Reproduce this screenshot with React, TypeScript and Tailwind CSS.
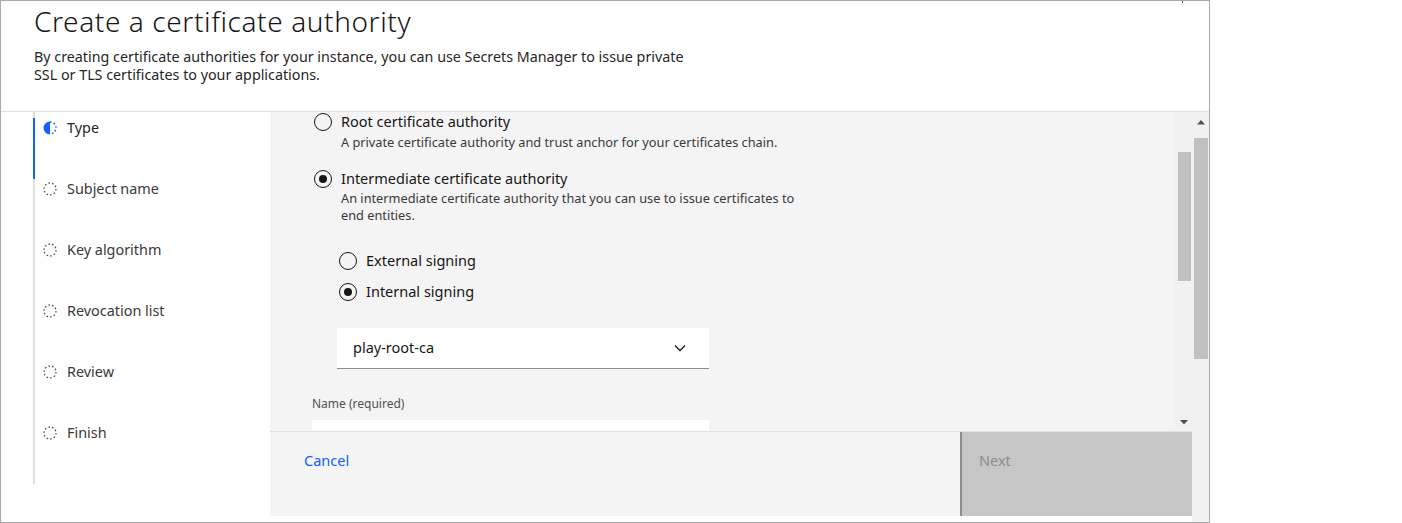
import React from "react";

const FONT = { fontFamily: '"Noto Sans", "Open Sans", Arial, sans-serif' };

function Radio({ checked }: { checked?: boolean }) {
  return (
    <div className="w-[18px] h-[18px] rounded-full border border-[#161616] flex items-center justify-center shrink-0 bg-transparent">
      {checked && <div className="w-[8px] h-[8px] rounded-full bg-[#161616]" />}
    </div>
  );
}

function DashedCircle() {
  return (
    <svg width="14" height="14" viewBox="0 0 14 14" className="shrink-0">
      <circle cx="7" cy="7" r="6" fill="none" stroke="#525252" strokeWidth="1.3" strokeDasharray="1.6 2.1" />
    </svg>
  );
}

function CurrentCircle() {
  return (
    <svg width="14" height="14" viewBox="0 0 14 14" className="shrink-0">
      <path d="M7 0.5 A6.5 6.5 0 0 0 7 13.5 Z" fill="#0f62fe" />
      <path d="M7 1 A6 6 0 0 1 7 13" fill="none" stroke="#0f62fe" strokeWidth="1.4" strokeDasharray="1.6 2.1" />
    </svg>
  );
}

const steps = ["Type", "Subject name", "Key algorithm", "Revocation list", "Review", "Finish"];

export default function App() {
  return (
    <div className="w-[1402px] h-[523px] bg-white flex" style={FONT}>
      <div className="w-[1210px] h-[523px] border border-[#a9a9a9] flex flex-col relative">
        <div className="absolute left-[1181px] top-0 w-[1px] h-[2px] bg-[#505050]" />
        {/* Header */}
        <div className="h-[111px] border-b border-[#e0e0e0] px-[33px] pt-[2px] shrink-0">
          <div className="text-[28px] leading-[36px] font-light text-[#161616] tracking-[0.6px]">
            Create a certificate authority
          </div>
          <div className="mt-[9px] text-[14.3px] leading-[18px] text-[#262626]">
            By creating certificate authorities for your instance, you can use Secrets Manager to issue private
            <br />
            SSL or TLS certificates to your applications.
          </div>
        </div>
        {/* Body */}
        <div className="flex flex-1 min-h-0">
          {/* Nav */}
          <div className="w-[269px] shrink-0 bg-white flex pl-[32px]">
            <div className="w-[2px] h-[372px] bg-[#e0e0e0] shrink-0">
              <div className="mt-[6px] h-[61px] w-[2px] bg-[#0f62fe]" />
            </div>
            <div className="flex flex-col">
              {steps.map((s, i) => (
                <div key={s} className="h-[61px] pt-[6px] flex items-start">
                  <div className="h-[20px] flex items-center pl-[8px] gap-[10px]">
                    {i === 0 ? <CurrentCircle /> : <DashedCircle />}
                    <span className={`text-[14.4px] leading-[20px] ${i === 0 ? "text-[#262626]" : "text-[#393939]"}`}>{s}</span>
                  </div>
                </div>
              ))}
            </div>
          </div>
          {/* Main */}
          <div className="w-[922px] shrink-0 flex flex-col">
            <div className="h-[319px] flex bg-[#f4f4f4] shrink-0">
              <div className="flex-1 overflow-hidden pl-[42px]">
                <div className="flex items-center h-[20px] gap-[9px] ml-[2px]">
                  <Radio />
                  <span className="text-[14.5px] text-[#161616]">Root certificate authority</span>
                </div>
                <div className="mt-[2px] ml-[29px] text-[12.75px] leading-[17px] text-[#393939]">
                  A private certificate authority and trust anchor for your certificates chain.
                </div>
                <div className="mt-[18px] flex items-center h-[20px] gap-[9px] ml-[2px]">
                  <Radio checked />
                  <span className="text-[14.5px] text-[#161616]">Intermediate certificate authority</span>
                </div>
                <div className="mt-[1px] ml-[29px] text-[12.75px] leading-[17px] text-[#393939]">
                  An intermediate certificate authority that you can use to issue certificates to
                  <br />
                  end entities.
                </div>
                <div className="pl-[25px]">
                  <div className="mt-[27px] flex items-center h-[20px] gap-[9px] ml-[2px]">
                    <Radio />
                    <span className="text-[14.5px] text-[#161616]">External signing</span>
                  </div>
                  <div className="mt-[11px] flex items-center h-[20px] gap-[9px] ml-[2px]">
                    <Radio checked />
                    <span className="text-[14.5px] text-[#161616]">Internal signing</span>
                  </div>
                  <div className="mt-[26px] w-[372px] h-[41px] bg-white border-b border-[#8d8d8d] flex items-center justify-between pl-[16px] pr-[23px]">
                    <span className="text-[14.5px] text-[#161616]">play-root-ca</span>
                    <svg width="12" height="8" viewBox="0 0 12 8">
                      <path d="M1 1.5 L6 6.5 L11 1.5" fill="none" stroke="#161616" strokeWidth="1.3" />
                    </svg>
                  </div>
                </div>
                <div className="mt-[27px] text-[12px] leading-[16px] text-[#525252]">Name (required)</div>
                <div className="mt-[8px] w-[397px] h-[40px] bg-white" />
              </div>
              {/* inner scrollbar */}
              <div className="w-[17px] bg-[#f1f1f1] shrink-0 flex flex-col items-center">
                <div className="mt-[40px] w-[13px] h-[129px] bg-[#c1c1c1] ml-[1px]" />
                <div className="flex-1" />
                <svg width="8" height="5" viewBox="0 0 8 5" className="mb-[6px]">
                  <path d="M0 0 H8 L4 4.5 Z" fill="#505050" />
                </svg>
              </div>
            </div>
            <div className="h-[85px] border-t border-[#e0e0e0] bg-[#f4f4f4] flex shrink-0">
              <div className="flex-1 pl-[34px] pt-[16px]">
                <span className="text-[14.5px] leading-[20px] text-[#0f62fe]">Cancel</span>
              </div>
              <div className="w-[232px] h-[84px] bg-[#c6c6c6] border-l-2 border-[#8d8d8d] pl-[17px] pt-[16px]">
                <span className="text-[14.5px] leading-[20px] text-[#8d8d8d]">Next</span>
              </div>
            </div>
            <div className="flex-1 bg-white" />
          </div>
          {/* outer scrollbar */}
          <div className="w-[17px] bg-[#f1f1f1] shrink-0 flex flex-col items-center">
            <svg width="8" height="5" viewBox="0 0 8 5" className="mt-[8px]">
              <path d="M0 4.5 H8 L4 0 Z" fill="#505050" />
            </svg>
            <div className="mt-[13px] w-[14px] h-[221px] bg-[#c1c1c1]" />
          </div>
        </div>
      </div>
    </div>
  );
}
